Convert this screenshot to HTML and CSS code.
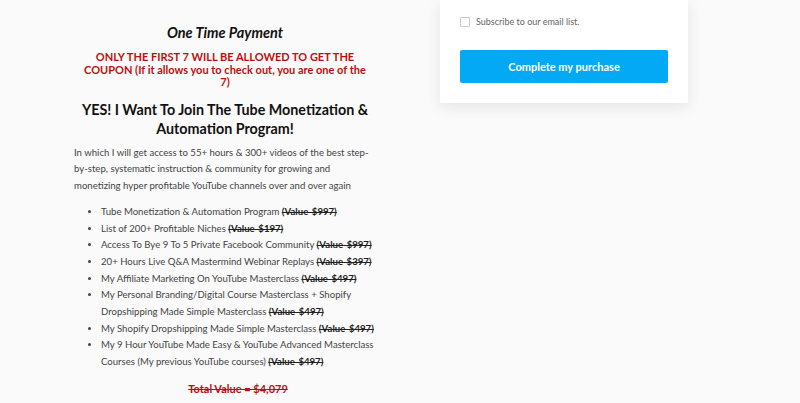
FILE: index.html
```html
<!DOCTYPE html>
<html>
<head>
<meta charset="utf-8">
<link rel="stylesheet" href="styles.css">
</head>
<body>
<div class="page">
  <div class="left">
    <h2 class="otp">One Time Payment</h2>
    <p class="coupon">ONLY THE FIRST 7 WILL BE ALLOWED TO GET THE COUPON (If it allows you to check out, you are one of the 7)</p>
    <h1 class="yes">YES! I Want To Join The Tube Monetization &amp; Automation Program!</h1>
    <p class="intro">In which I will get access to 55+ hours &amp; 300+ videos of the best step-by-step, systematic instruction &amp; community for growing and monetizing hyper profitable YouTube channels over and over again</p>
    <ul class="items">
      <li>Tube Monetization &amp; Automation Program <s>(Value-$997)</s></li>
      <li>List of 200+ Profitable Niches <s>(Value-$197)</s></li>
      <li>Access To Bye 9 To 5 Private Facebook Community <s>(Value-$997)</s></li>
      <li>20+ Hours Live Q&amp;A Mastermind Webinar Replays <s>(Value-$397)</s></li>
      <li>My Affiliate Marketing On YouTube Masterclass <s>(Value-$497)</s></li>
      <li>My Personal Branding/Digital Course Masterclass + Shopify Dropshipping Made Simple Masterclass <s>(Value-$497)</s></li>
      <li>My Shopify Dropshipping Made Simple Masterclass <s>(Value-$497)</s></li>
      <li>My 9 Hour YouTube Made Easy &amp; YouTube Advanced Masterclass Courses (My previous YouTube courses) <s>(Value-$497)</s></li>
    </ul>
    <p class="total"><s>Total Value = $4,079</s></p>
  </div>
  <div class="right">
    <div class="card">
      <label class="sub"><span class="box"></span>Subscribe to our email list.</label>
      <button class="buy">Complete my purchase</button>
    </div>
  </div>
</div>
</body>
</html>
```
FILE: styles.css
```css
html, body {
  margin: 0;
  padding: 0;
  background: #fafafa;
  font-family: Lato, "Open Sans", sans-serif;
  color: #333;
}
.page {
  display: flex;
  align-items: flex-start;
  padding-left: 74px;
}
.left {
  width: 302px;
  text-align: center;
}
.otp {
  margin: 24px 0 0;
  font-size: 14.5px;
  line-height: 18px;
  font-style: italic;
  font-weight: 700;
  color: #111;
}
.coupon {
  margin: 9px 6px 0;
  font-size: 11px;
  line-height: 12.5px;
  font-weight: 700;
  color: #c00d0d;
}
.yes {
  margin: 11px 0 0;
  font-size: 14.3px;
  line-height: 19px;
  font-weight: 700;
  color: #111;
}
.intro {
  margin: 7px 0 0;
  text-align: left;
  font-size: 9.6px;
  line-height: 16.5px;
  color: #444;
}
.items {
  margin: 10px 0 0;
  padding-left: 27px;
  text-align: left;
  font-size: 9.6px;
  line-height: 16.67px;
  color: #444;
}
.items s {
  font-weight: 700;
  color: #222;
}
.total {
  margin: 11px 0 0;
  padding-left: 26px;
  font-size: 11px;
  line-height: 14px;
  font-weight: 700;
  color: #c00d0d;
}
.right {
  margin-left: 64px;
}
.card {
  width: 208px;
  padding: 15px 20px 20px;
  background: #fff;
  box-shadow: 0 4px 14px rgba(0,0,0,0.09);
  display: flex;
  flex-direction: column;
}
.sub {
  display: flex;
  align-items: center;
  font-size: 9px;
  color: #666;
  line-height: 13px;
}
.box {
  width: 8px;
  height: 8px;
  border: 1px solid #ccc;
  border-radius: 1px;
  margin-right: 6px;
  background: #fff;
}
.buy {
  margin-top: 22px;
  height: 33px;
  border: none;
  border-radius: 2px;
  background: #03a9f4;
  color: #fff;
  font-family: inherit;
  font-size: 11px;
  font-weight: 700;
}
```
